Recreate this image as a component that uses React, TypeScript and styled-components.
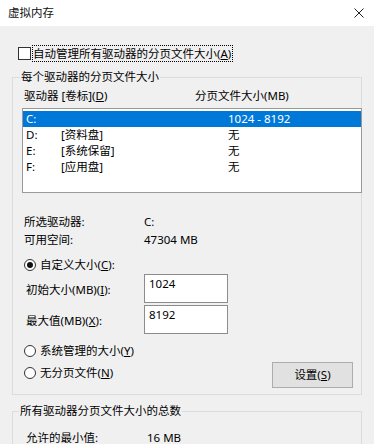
import React from 'react';
import styled, { createGlobalStyle } from 'styled-components';

const Global = createGlobalStyle`
  html, body { margin: 0; padding: 0; background: #f0f0f0; }
  body {
    font-family: "Noto Sans", "Noto Sans CJK SC", sans-serif;
    font-size: 11.5px;
    color: #000;
  }
  * { box-sizing: border-box; }
`;

const Window = styled.div`
  width: 374px;
  height: 444px;
  overflow: hidden;
  background: #f0f0f0;
  display: flex;
  flex-direction: column;
`;

const TitleBar = styled.div`
  height: 26px;
  flex: none;
  background: #fff;
  display: flex;
  align-items: center;
  justify-content: space-between;
  padding: 0 10px 0 8px;
`;

const Title = styled.span`
  line-height: 16px;
  color: #111;
`;

const CloseIcon = styled.svg`
  width: 10px;
  height: 10px;
  display: block;
`;

const Body = styled.div`
  padding: 19px 12px 0 12px;
  display: flex;
  flex-direction: column;
`;

const CheckRow = styled.div`
  height: 17px;
  display: flex;
  align-items: center;
  margin-left: 6px;
`;

const CheckBox = styled.span`
  width: 13px;
  height: 13px;
  border: 1px solid #333;
  background: #fff;
  flex: none;
`;

const FocusLabel = styled.span`
  margin-left: 1px;
  border: 1px dotted #000;
  line-height: 15px;
  padding: 0 1px 0 0;
`;

const U = styled.span`
  text-decoration: underline;
  text-underline-offset: 1px;
`;

const Group = styled.fieldset<{ $mt: number; $pt: number; $pb: number }>`
  margin: ${(p) => p.$mt}px 0 0;
  padding: ${(p) => p.$pt}px 0 ${(p) => p.$pb}px 9px;
  border: 1px solid #dcdcdc;
  min-width: 0;
  display: flex;
  flex-direction: column;
`;

const Legend = styled.legend<{ $shift: number }>`
  padding: 0 1px;
  margin-left: ${(p) => p.$shift}px;
  line-height: 16px;
`;

const HeaderRow = styled.div`
  display: grid;
  grid-template-columns: 171px 1fr;
  padding-left: 2px;
  line-height: 16px;
  height: 16px;
`;

const ListBox = styled.div`
  margin-top: 4px;
  margin-right: -1px;
  height: 85px;
  border: 1px solid #9a9a9a;
  background: #fff;
  padding-top: 2px;
`;

const ListRow = styled.div<{ $selected?: boolean }>`
  display: grid;
  grid-template-columns: 35px 167px 1fr;
  padding-left: 3px;
  height: 16px;
  line-height: 16px;
  background: ${(p) => (p.$selected ? '#0078d7' : 'transparent')};
  color: ${(p) => (p.$selected ? '#fff' : '#000')};
`;

const InfoRow = styled.div<{ $mt?: number; $col: number; $indent: number }>`
  display: grid;
  grid-template-columns: ${(p) => p.$col}px 1fr;
  padding-left: ${(p) => p.$indent}px;
  margin-top: ${(p) => p.$mt ?? 0}px;
  height: 18px;
  line-height: 18px;
`;

const RadioRow = styled.div<{ $mt: number }>`
  display: flex;
  align-items: center;
  height: 18px;
  margin-top: ${(p) => p.$mt}px;
  padding-left: 2px;
  gap: 4px;
  line-height: 18px;
`;

const RadioCircle = styled.span<{ $checked?: boolean }>`
  width: 12px;
  height: 12px;
  border-radius: 50%;
  border: 1px solid #333;
  background: #fff;
  flex: none;
  display: flex;
  align-items: center;
  justify-content: center;
  &::after {
    content: '';
    width: 6px;
    height: 6px;
    border-radius: 50%;
    background: ${(p) => (p.$checked ? '#111' : 'transparent')};
  }
`;

const FieldRow = styled.div<{ $mt: number }>`
  display: grid;
  grid-template-columns: 118px 84px;
  align-items: center;
  padding-left: 4px;
  margin-top: ${(p) => p.$mt}px;
  height: 29px;
`;

const TextBox = styled.div`
  height: 29px;
  border: 1px solid #8c8c8c;
  background: #fff;
  padding: 1px 0 0 4px;
  line-height: 16px;
`;

const ActionRow = styled.div`
  display: flex;
  align-items: flex-start;
  height: 26px;
  margin-top: 2px;
`;

const RadioInline = styled(RadioRow)`
  margin-top: 2px;
`;

const Button = styled.div`
  margin-left: auto;
  margin-right: 8px;
  width: 81px;
  height: 26px;
  background: #e1e1e1;
  border: 1px solid #adadad;
  display: flex;
  align-items: center;
  justify-content: center;
  line-height: 16px;
`;

const drives = [
  { d: 'C:', label: '', size: '1024 - 8192', selected: true },
  { d: 'D:', label: '[资料盘]', size: '无' },
  { d: 'E:', label: '[系统保留]', size: '无' },
  { d: 'F:', label: '[应用盘]', size: '无' },
];

export default function App() {
  return (
    <Window>
      <Global />
      <TitleBar>
        <Title>虚拟内存</Title>
        <CloseIcon viewBox="0 0 10 10">
          <path d="M0.5 0.5 L9.5 9.5 M9.5 0.5 L0.5 9.5" stroke="#222" strokeWidth="1" fill="none" />
        </CloseIcon>
      </TitleBar>
      <Body>
        <CheckRow>
          <CheckBox />
          <FocusLabel>
            自动管理所有驱动器的分页文件大小(<U>A</U>)
          </FocusLabel>
        </CheckRow>

        <Group $mt={7} $pt={3} $pb={6}>
          <Legend $shift={-2}>每个驱动器的分页文件大小</Legend>
          <HeaderRow>
            <span>
              驱动器 [卷标](<U>D</U>)
            </span>
            <span>分页文件大小(MB)</span>
          </HeaderRow>
          <ListBox>
            {drives.map((r) => (
              <ListRow key={r.d} $selected={r.selected}>
                <span>{r.d}</span>
                <span>{r.label}</span>
                <span>{r.size}</span>
              </ListRow>
            ))}
          </ListBox>

          <InfoRow $mt={20} $col={120} $indent={2}>
            <span>所选驱动器:</span>
            <span>C:</span>
          </InfoRow>
          <InfoRow $col={120} $indent={2}>
            <span>可用空间:</span>
            <span>47304 MB</span>
          </InfoRow>

          <RadioRow $mt={7}>
            <RadioCircle $checked />
            <span>
              自定义大小(<U>C</U>):
            </span>
          </RadioRow>
          <FieldRow $mt={0}>
            <span>
              初始大小(MB)(<U>I</U>):
            </span>
            <TextBox>1024</TextBox>
          </FieldRow>
          <FieldRow $mt={2}>
            <span>
              最大值(MB)(<U>X</U>):
            </span>
            <TextBox>8192</TextBox>
          </FieldRow>

          <RadioRow $mt={8}>
            <RadioCircle />
            <span>
              系统管理的大小(<U>Y</U>)
            </span>
          </RadioRow>
          <ActionRow>
            <RadioInline $mt={2}>
              <RadioCircle />
              <span>
                无分页文件(<U>N</U>)
              </span>
            </RadioInline>
            <Button>
              设置(<U>S</U>)
            </Button>
          </ActionRow>
        </Group>

        <Group $mt={8} $pt={10} $pb={6}>
          <Legend $shift={-3}>所有驱动器分页文件大小的总数</Legend>
          <InfoRow $col={121} $indent={4}>
            <span>允许的最小值:</span>
            <span>16 MB</span>
          </InfoRow>
        </Group>
      </Body>
    </Window>
  );
}
